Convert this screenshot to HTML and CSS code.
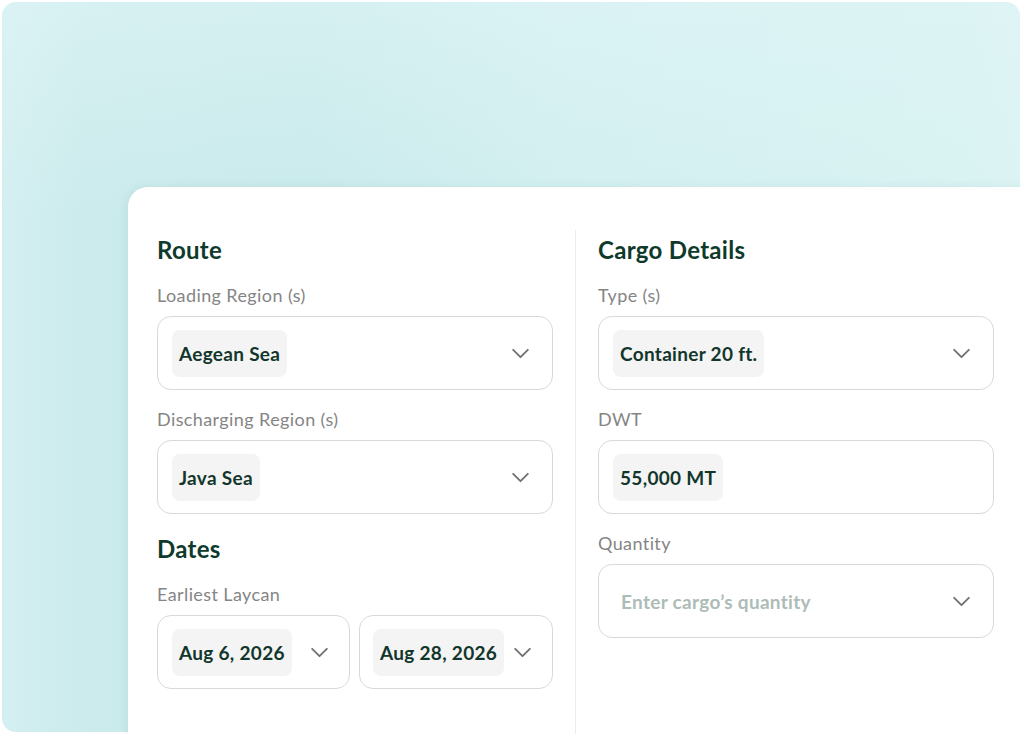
FILE: index.html
```html
<!DOCTYPE html>
<html lang="en">
<head>
  <meta charset="UTF-8" />
  <meta name="viewport" content="width=device-width, initial-scale=1" />
  <title>Search - Route &amp; Cargo</title>
  <link rel="stylesheet" href="styles.css">
</head>
<body>
  <div class="backdrop">
    <section class="card">
      <div class="column">
        <h2>Route</h2>
        <label>Loading Region (s)</label>
        <div class="field">
          <span class="chip">Aegean Sea</span>
          <svg class="chevron" viewBox="0 0 20 12"><path d="M2 2l8 8 8-8" /></svg>
        </div>

        <label>Discharging Region (s)</label>
        <div class="field">
          <span class="chip">Java Sea</span>
          <svg class="chevron" viewBox="0 0 20 12"><path d="M2 2l8 8 8-8" /></svg>
        </div>

        <h2 class="spaced">Dates</h2>
        <label>Earliest Laycan</label>
        <div class="date-row">
          <div class="field">
            <span class="chip">Aug 6, 2026</span>
            <svg class="chevron" viewBox="0 0 20 12"><path d="M2 2l8 8 8-8" /></svg>
          </div>
          <div class="field">
            <span class="chip">Aug 28, 2026</span>
            <svg class="chevron" viewBox="0 0 20 12"><path d="M2 2l8 8 8-8" /></svg>
          </div>
        </div>
      </div>

      <div class="divider"></div>

      <div class="column">
        <h2>Cargo Details</h2>
        <label>Type (s)</label>
        <div class="field">
          <span class="chip">Container 20 ft.</span>
          <svg class="chevron" viewBox="0 0 20 12"><path d="M2 2l8 8 8-8" /></svg>
        </div>

        <label>DWT</label>
        <div class="field">
          <span class="chip">55,000 MT</span>
        </div>

        <label>Quantity</label>
        <div class="field">
          <span class="placeholder">Enter cargo’s quantity</span>
          <svg class="chevron" viewBox="0 0 20 12"><path d="M2 2l8 8 8-8" /></svg>
        </div>
      </div>
    </section>
  </div>
</body>
</html>
```

FILE: styles.css
```css
* { box-sizing: border-box; margin: 0; padding: 0; }
html, body {
  height: 100%;
  overflow: hidden;
}
body {
  font-family: Lato, 'Noto Sans', sans-serif;
  background: #ffffff;
  color: #103a2d;
  padding: 2px 0 0 2px;
}
.backdrop {
  width: 1018px;
  height: 730px;
  border-radius: 14px;
  background:
    linear-gradient(180deg, rgba(225, 245, 246, 0.55) 0%, rgba(225, 245, 246, 0) 30%),
    linear-gradient(90deg, #d4eff1 0%, #cbebec 8%, #c8eaeb 30%, #d2eff0 55%, #d8f2f2 95%, #dcf3f4 100%);
  padding: 185px 0 0 126px;
}
.card {
  width: 896px;
  height: 560px;
  background: #ffffff;
  border-radius: 20px 0 0 0;
  box-shadow: -2px 0 8px rgba(90, 150, 150, 0.12);
  padding: 43px 30px 0 29px;
  display: grid;
  grid-template-columns: 396px 1px 396px;
  column-gap: 22px;
}
.divider {
  background: #ececec;
}
.column {
  display: flex;
  flex-direction: column;
  padding-top: 6px;
}
h2 {
  font-size: 24px;
  line-height: 28px;
  font-weight: 700;
  letter-spacing: 0.3px;
  color: #0e3a2c;
  margin-bottom: 21px;
}
h2.spaced {
  margin-top: 2px;
}
label {
  font-size: 18px;
  line-height: 20px;
  letter-spacing: 0.4px;
  color: #858585;
  margin-bottom: 11px;
}
.field {
  height: 74px;
  border: 1.5px solid #d9d9d9;
  border-radius: 14px;
  display: flex;
  align-items: center;
  padding: 0 22px 0 14px;
  margin-bottom: 19px;
}
.field:last-child { margin-bottom: 0; }
.chip {
  background: #f4f4f4;
  border-radius: 8px;
  height: 47px;
  line-height: 47px;
  padding: 0 7px;
  font-size: 19px;
  font-weight: 700;
  letter-spacing: 0.3px;
  color: #12362b;
  white-space: nowrap;
}
.placeholder {
  padding-left: 8px;
  font-size: 19px;
  font-weight: 700;
  letter-spacing: 0.3px;
  color: #aebcb7;
}
.chevron {
  flex-shrink: 0;
  width: 19px;
  height: 11px;
  margin-left: auto;
  fill: none;
  stroke: #707070;
  stroke-width: 2;
  stroke-linecap: round;
  stroke-linejoin: round;
}
.date-row {
  display: grid;
  grid-template-columns: 193px 194px;
  gap: 9px;
}
.date-row .field { padding-right: 20px; margin-bottom: 0; }
.date-row .field + .field { padding-left: 13px; }
.date-row .field + .field .chip { margin-right: 5px; }
```
